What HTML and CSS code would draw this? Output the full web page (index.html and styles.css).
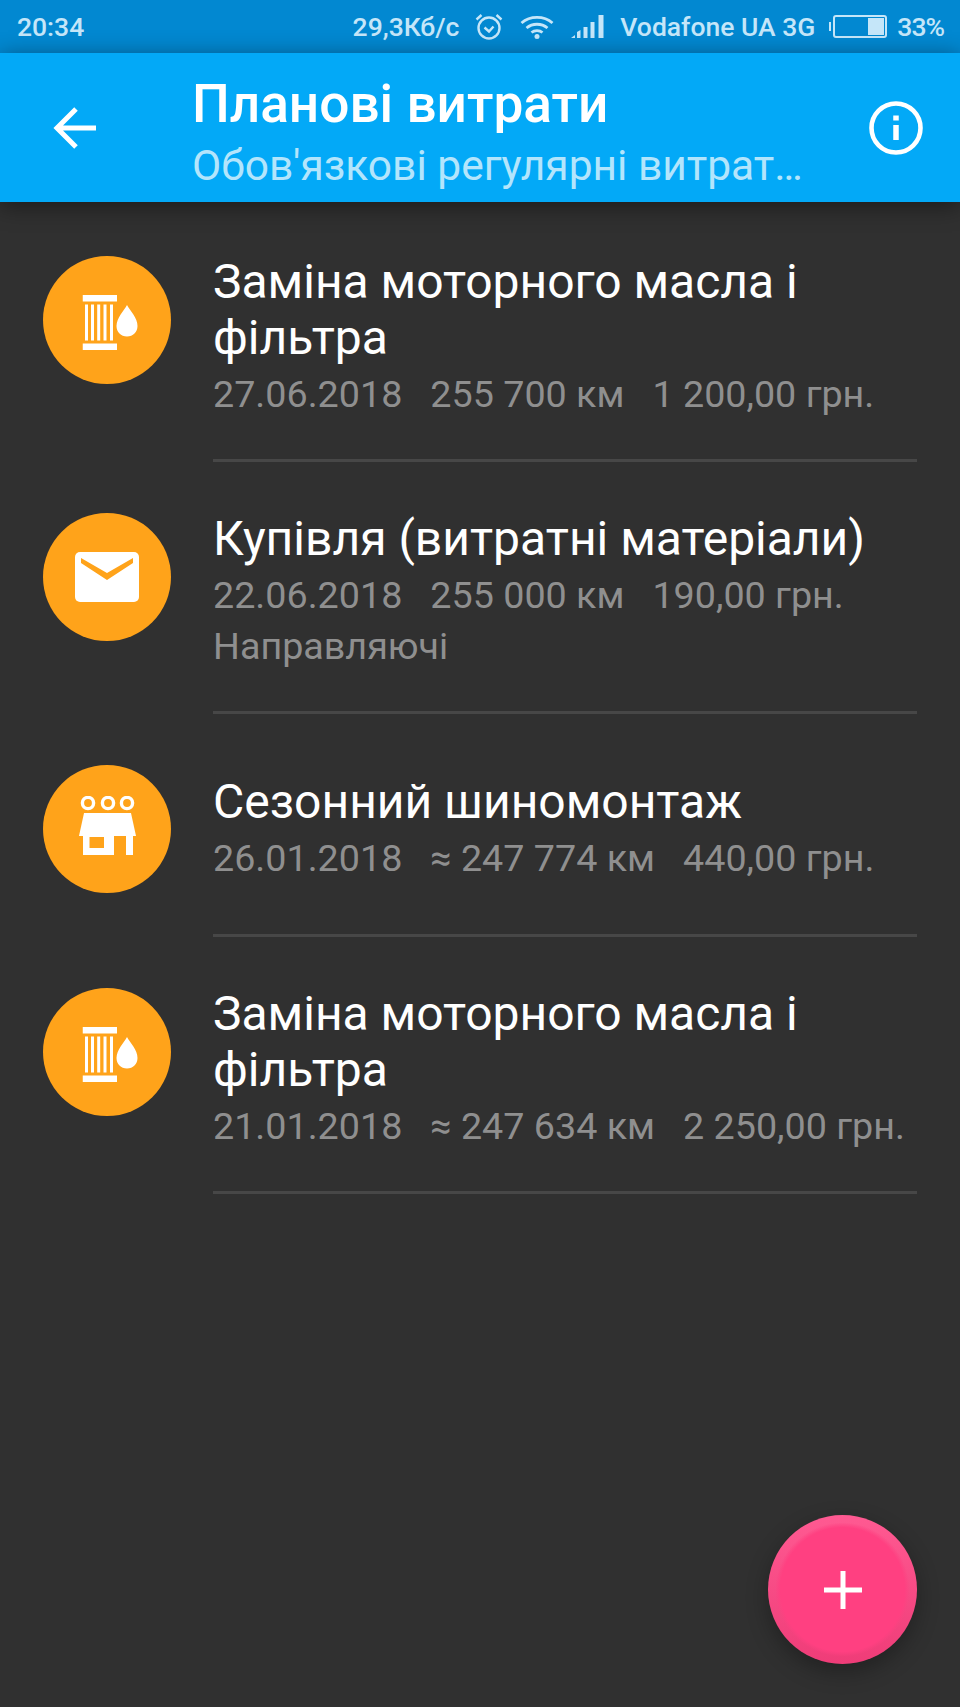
FILE: index.html
```html
<!DOCTYPE html>
<html>
	<head>
		<meta charset="utf-8">
		<title>Планові витрати</title>
		<link rel="stylesheet" href="styles.css">
	</head>
	<body>
		<div class="page">
			<div class="statusbar">
				<span class="time">20:34</span>
				<div class="status-right">
					<span>29,3Кб/с</span>
					<svg class="ic-alarm" width="30" height="30" viewBox="0 0 30 30" fill="none" stroke="currentColor" stroke-width="2.4">
						<circle cx="15" cy="16" r="10.5"/>
						<path d="M10.5 15.5l4.5 4 4.5-5M2.5 7.5l5-4.5M27.5 7.5l-5-4.5"/>
					</svg>
					<svg class="ic-wifi" width="34" height="24" viewBox="0 0 34 24" fill="none" stroke="currentColor" stroke-width="2.8">
						<path d="M1.500 8C10 .5 24 .5 32.500 8M6.500 13c6-5 15-5 21 0M11.500 17.500c3-2.500 8-2.500 11 0"/>
						<circle cx="17" cy="21.500" r="2.500" fill="currentColor" stroke="none"/>
					</svg>
					<svg class="ic-signal" width="33" height="23" viewBox="0 0 33 23" fill="currentColor">
						<path d="M0 23l4-3v3zM6 23v-6l3.500-2v8zM12.500 23v-11h4v11zM19.500 23v-16h4v16zM27.500 23v-23h5v23z"/>
					</svg>
					<span>Vodafone UA 3G</span>
					<div class="battery">
						<div class="battery-level"></div>
					</div>
					<span class="percent">33%</span>
				</div>
			</div>

			<div class="toolbar">
				<svg class="ic-back" width="44" height="44" viewBox="0 0 44 44" fill="none" stroke="#fff" stroke-width="5">
					<path d="M43 22H4M23 3L4 22l19 19"/>
				</svg>
				<div class="toolbar-text">
					<div class="toolbar-title">Планові витрати</div>
					<div class="toolbar-sub">Обов'язкові регулярні витрат…</div>
				</div>
				<svg class="ic-info" width="54" height="54" viewBox="0 0 54 54" fill="none" stroke="#fff">
					<circle cx="27" cy="27" r="24.500" stroke-width="4.600"/>
					<path d="M27 24v15" stroke-width="5.500"/>
					<path d="M27 14.500v5" stroke-width="5.500"/>
				</svg>
			</div>

			<div class="list">
				<div class="row">
					<div class="circle">
						<svg width="64" height="60" viewBox="-7.500 -5 64 60">
							<use href="#filter" width="56" height="56" fill="#fff"/>
						</svg>
					</div>
					<div class="row-body">
						<div class="row-title">Заміна моторного масла і фільтра</div>
						<div class="row-meta"><span>27.06.2018</span><span>255 700 км</span><span>1 200,00 грн.</span></div>
					</div>
				</div>
				<div class="row">
					<div class="circle">
						<svg width="64" height="50" viewBox="0 0 64 50">
							<rect width="64" height="50" rx="5" fill="#fff"/>
							<path d="M6 6v5l26 17 26-17V6L32 21z" fill="#ffa31a"/>
						</svg>
					</div>
					<div class="row-body">
						<div class="row-title">Купівля (витратні матеріали)</div>
						<div class="row-meta"><span>22.06.2018</span><span>255 000 км</span><span>190,00 грн.</span></div>
						<div class="row-meta">Направляючі</div>
					</div>
				</div>
				<div class="row">
					<div class="circle">
						<svg width="57" height="66" viewBox="0 0 57 66" fill="#fff">
							<g fill="none" stroke="#fff" stroke-width="3.400">
								<circle cx="9" cy="7" r="5.600"/>
								<circle cx="29" cy="7" r="5.600"/>
								<circle cx="48" cy="7" r="5.600"/>
							</g>
							<path d="M5 17H52L57 40H0z"/>
							<path fill-rule="evenodd" d="M4 40H54V59H47V40H35V59H4zM10.500 41V52H25V41z"/>
						</svg>
					</div>
					<div class="row-body">
						<div class="row-title">Сезонний шиномонтаж</div>
						<div class="row-meta"><span>26.01.2018</span><span>≈ 247 774 км</span><span>440,00 грн.</span></div>
					</div>
				</div>
				<div class="row">
					<div class="circle">
						<svg width="64" height="60" viewBox="-7.500 -5 64 60">
							<use href="#filter" width="56" height="56" fill="#fff"/>
						</svg>
					</div>
					<div class="row-body">
						<div class="row-title">Заміна моторного масла і фільтра</div>
						<div class="row-meta"><span>21.01.2018</span><span>≈ 247 634 км</span><span>2 250,00 грн.</span></div>
					</div>
				</div>
			</div>

			<div class="fab">
				<svg width="38" height="38" viewBox="0 0 38 38" fill="#fff">
					<path d="M16.500 0h5v16.500H38v5H21.500V38h-5V21.500H0v-5h16.500z"/>
				</svg>
			</div>
		</div>

		<svg class="defs" width="0" height="0">
			<symbol id="filter" viewBox="0 0 56 56">
				<path d="M0 0h34.500v6.500H0zM0 48.500h34.500v6.500H0zM2.500 9.500h3v36h-3zM8.500 9.500h3v36h-3zM14.700 9.500h3v36h-3zM21 9.500h3v36h-3zM27.500 9.500h3v36h-3z"/>
				<path d="M44.500 10c3 5.500 10.500 13 10.500 21 0 6-4.500 10.500-10.500 10.500S34 37 34 31c0-8 7.500-15.500 10.500-21z"/>
			</symbol>
		</svg>
	</body>
</html>
```

FILE: styles.css
```css
*{
	margin: 0;
	padding: 0;
	box-sizing: border-box;
}
body{
	background-color: #303030;
	font-family: Roboto, "Noto Sans", sans-serif;
}
.page{
	position: relative;
	width: 960px;
	height: 1707px;
	overflow: hidden;
	background-color: #303030;
}
.defs{
	position: absolute;
}
.statusbar{
	display: flex;
	justify-content: space-between;
	align-items: center;
	height: 53px;
	padding: 0 16px 0 17px;
	background-color: #0288d1;
	color: #c5e6f9;
	font-size: 26.500px;
	font-weight: 500;
}
.status-right{
	display: flex;
	align-items: center;
}
.ic-alarm{
	margin-left: 15px;
}
.ic-wifi{
	margin-left: 16px;
}
.ic-signal{
	margin-left: 17px;
	margin-right: 16px;
}
.battery{
	position: relative;
	width: 54px;
	height: 23px;
	margin-left: 18px;
	margin-right: 10px;
	padding: 1px;
	border: 2px solid #c5e6f9;
	border-radius: 3px;
	display: flex;
	justify-content: flex-end;
}
.battery::before{
	content: "";
	position: absolute;
	left: -6px;
	top: 5px;
	width: 2px;
	height: 9px;
	background-color: #c5e6f9;
}
.battery-level{
	width: 16px;
	background-color: #c5e6f9;
}
.percent{
	letter-spacing: -1px;
}
.toolbar{
	position: relative;
	z-index: 1;
	display: flex;
	align-items: center;
	height: 149px;
	padding-left: 53px;
	background-color: #03a9f7;
	box-shadow: 0 4px 22px rgba(0,0,0,0.45);
}
.toolbar-text{
	width: 620px;
	margin-left: 95px;
	margin-top: 15px;
}
.toolbar-title{
	font-size: 53.200px;
	line-height: 62px;
	font-weight: 500;
	color: #fff;
}
.toolbar-sub{
	font-size: 42.500px;
	line-height: 62px;
	color: #b3e5fc;
	white-space: nowrap;
}
.ic-info{
	margin-left: 57px;
}
.list{
	padding-top: 3px;
}
.row{
	display: flex;
	align-items: flex-start;
	padding-left: 43px;
	padding-right: 43px;
}
.circle{
	display: flex;
	justify-content: center;
	align-items: center;
	flex: none;
	width: 128px;
	height: 128px;
	margin-top: 51px;
	border-radius: 50%;
	background-color: #ffa31a;
}
.row-body{
	display: flex;
	flex-direction: column;
	justify-content: center;
	flex: 1;
	min-height: 223px;
	margin-left: 42px;
	padding-top: 49px;
	padding-bottom: 39px;
	border-bottom: 3px solid #474747;
}
.row-title{
	margin-bottom: 3px;
	font-size: 48px;
	line-height: 56px;
	color: #fff;
}
.row-meta{
	display: flex;
	gap: 28px;
	font-size: 37.700px;
	line-height: 51px;
	color: #8f8f8f;
}
.fab{
	position: absolute;
	left: 768px;
	top: 1515px;
	display: flex;
	justify-content: center;
	align-items: center;
	width: 149px;
	height: 149px;
	border-radius: 50%;
	background: radial-gradient(circle at 50% 50%, #ff4081 62px, rgba(255,64,129,0) 67px), linear-gradient(#ff5a92, #ef3c78);
	box-shadow: 0 8px 22px rgba(0,0,0,0.3);
}
```
